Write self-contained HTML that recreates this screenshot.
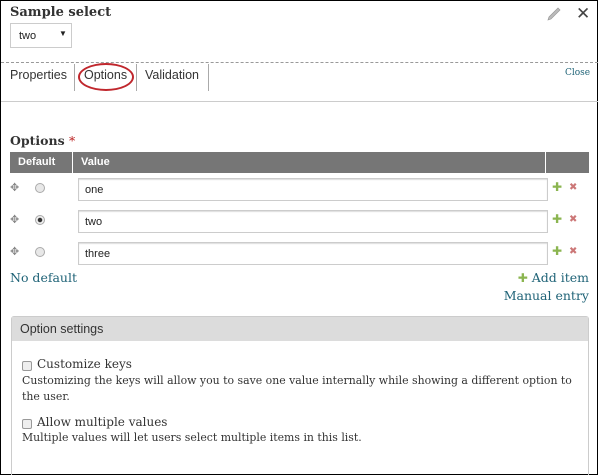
<!DOCTYPE html>
<html><head><meta charset="utf-8"><style>
*{margin:0;padding:0;box-sizing:border-box}
body{width:600px;height:476px;background:#fff;position:relative;overflow:hidden;font-family:"DejaVu Serif","Liberation Serif",serif;color:#333}
.a{position:absolute}
.frame{left:0;top:0;width:598px;height:475px;border:1px solid #000}
.sans{font-family:"Liberation Sans",sans-serif}
.inp{position:absolute;left:78px;width:470px;height:23px;border:1px solid #ccc;box-shadow:inset 0 1px 1px #ddd;font:11px "Liberation Sans",sans-serif;color:#222;padding:5px 0 0 6px}
.radio{position:absolute;left:35px;width:10px;height:10px;border-radius:50%;border:1px solid #aaa;background:#e8e8e8}
.drag{position:absolute;left:10px;font-size:11px;color:#888;font-family:"DejaVu Sans",sans-serif}
.plus{position:absolute;left:552px;color:#8bb550;font-size:12px;font-family:"DejaVu Sans",sans-serif}
.x{position:absolute;left:569px;color:#c77;font-size:10px;font-family:"DejaVu Sans",sans-serif}
.link{color:#1f6377}
.cb{position:absolute;left:22px;width:10px;height:10px;border:1px solid #999;border-radius:2px;background:#eee}
</style></head><body>
<div class="a frame"></div>
<div class="a" style="left:10px;top:5px;font-weight:bold;font-size:13px;color:#333;font-family:'DejaVu Serif',serif">Sample select</div>
<div class="a sans" style="left:10px;top:23px;width:62px;height:25px;border:1px solid #ccc;font-size:11px;padding:6px 0 0 8px;color:#222">two<span style="position:absolute;left:48px;top:5px;font-size:8px">▼</span></div>
<svg class="a" style="left:545px;top:6px" width="18" height="16"><path d="M3 14 L4 11 L13 2 L15 4 L6 13 Z" fill="#bbb" stroke="#999" stroke-width="0.7"/></svg>
<div class="a sans" style="left:576px;top:4px;font-size:17px;color:#444">✕</div>
<div class="a" style="left:1px;top:62px;width:597px;border-top:1px dashed #999"></div>
<div class="a sans" style="left:10px;top:68px;font-size:12.5px;color:#333">Properties</div>
<div class="a" style="left:74px;top:64px;height:27px;border-left:1px solid #aaa"></div>
<div class="a sans" style="left:84px;top:68px;font-size:12.5px;color:#333">Options</div>
<div class="a" style="left:136px;top:64px;height:27px;border-left:1px solid #aaa"></div>
<div class="a sans" style="left:145px;top:68px;font-size:12.5px;color:#333">Validation</div>
<div class="a" style="left:208px;top:64px;height:27px;border-left:1px solid #aaa"></div>
<div class="a" style="left:78px;top:63px;width:56px;height:28px;border:2px solid #c0272d;border-radius:50%"></div>
<div class="a" style="left:565px;top:68px;font-size:9px" ><span class="link">Close</span></div>
<div class="a" style="left:1px;top:101px;width:597px;border-top:1px solid #ccc"></div>
<div class="a" style="left:10px;top:133px;font-weight:bold;font-size:12.5px;color:#333">Options <span style="color:#b22;font-weight:normal">*</span></div>
<div class="a" style="left:10px;top:152px;width:579px;height:21px;background:#767676"></div>
<div class="a" style="left:72px;top:152px;height:21px;border-left:1px solid #fff"></div>
<div class="a" style="left:545px;top:152px;height:21px;border-left:1px solid #fff"></div>
<div class="a sans" style="left:18px;top:156px;font-size:11px;font-weight:bold;color:#fff">Default</div>
<div class="a sans" style="left:81px;top:156px;font-size:11px;font-weight:bold;color:#fff">Value</div>

<div class="drag" style="top:181px">✥</div><div class="radio" style="top:183px"></div><div class="inp" style="top:178px">one</div><div class="plus" style="top:180px">✚</div><div class="x" style="top:182px">✖</div>
<div class="drag" style="top:213px">✥</div><div class="radio" style="top:215px;background:radial-gradient(circle,#333 0 2px,#eee 2.5px)"></div><div class="inp" style="top:210px">two</div><div class="plus" style="top:212px">✚</div><div class="x" style="top:214px">✖</div>
<div class="drag" style="top:245px">✥</div><div class="radio" style="top:247px"></div><div class="inp" style="top:242px">three</div><div class="plus" style="top:244px">✚</div><div class="x" style="top:246px">✖</div>

<div class="a link" style="left:10px;top:270px;font-size:12.5px">No default</div>
<div class="a link" style="right:11px;top:270px;font-size:12.5px"><span style="color:#8bb550;font-size:12px;font-family:'DejaVu Sans',sans-serif">✚</span> Add item</div>
<div class="a link" style="right:11px;top:288px;font-size:12.5px">Manual entry</div>

<div class="a" style="left:11px;top:316px;width:578px;height:159px;border:1px solid #ccc;border-bottom:none;border-radius:3px 3px 0 0"></div>
<div class="a sans" style="left:12px;top:317px;width:576px;height:24px;background:#dcdcdc;font-size:12.5px;color:#333;padding:5px 0 0 8px">Option settings</div>
<div class="cb" style="top:361px"></div>
<div class="a" style="left:37px;top:357px;font-size:12px;color:#333">Customize keys</div>
<div class="a" style="left:22px;top:373px;font-size:10.9px;line-height:16px;width:565px;color:#333">Customizing the keys will allow you to save one value internally while showing a different option to the user.</div>
<div class="cb" style="top:419px"></div>
<div class="a" style="left:37px;top:415px;font-size:12px;color:#333">Allow multiple values</div>
<div class="a" style="left:22px;top:431px;font-size:10.9px;color:#333">Multiple values will let users select multiple items in this list.</div>
</body></html>
